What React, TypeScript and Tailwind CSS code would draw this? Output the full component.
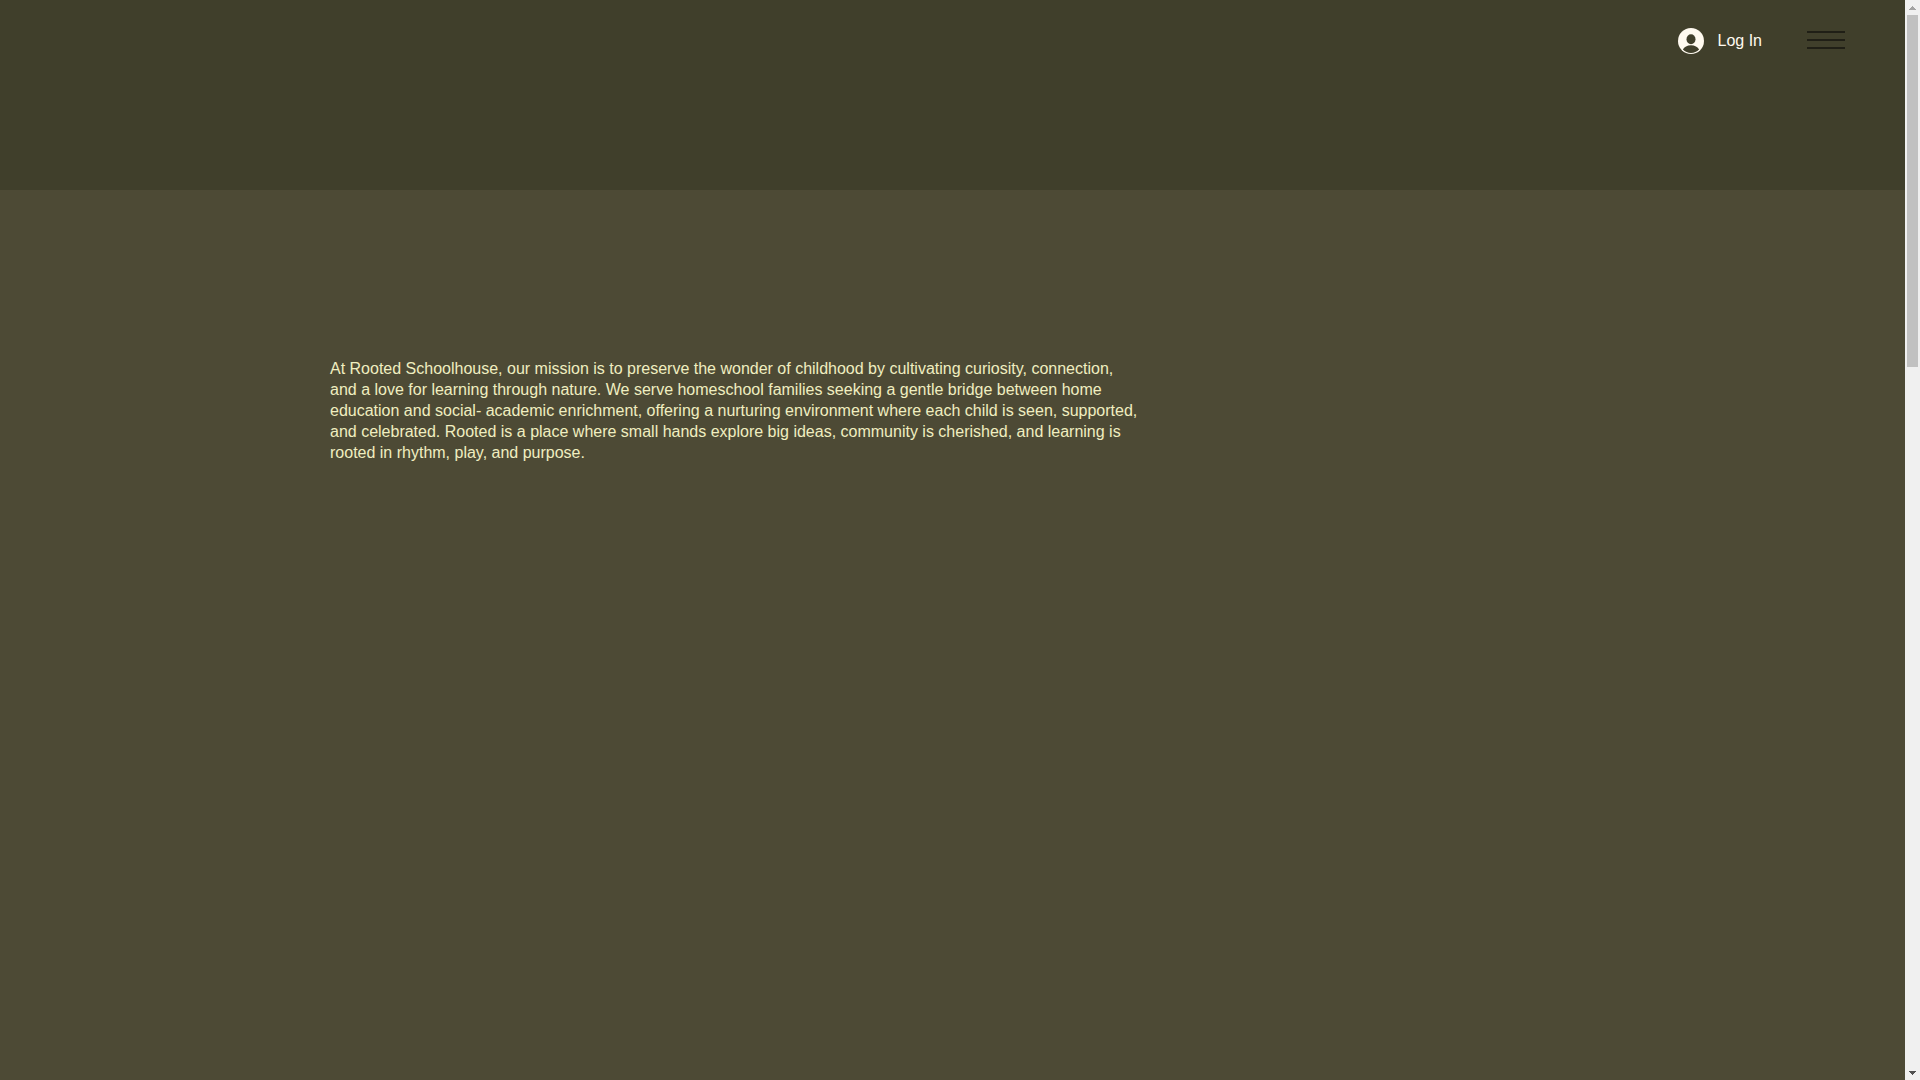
import { useState } from "react";

const mission =
  "At Rooted Schoolhouse, our mission is to preserve the wonder of childhood by cultivating curiosity, connection, and a love for learning through nature. We serve homeschool families seeking a gentle bridge between home education and social- academic enrichment, offering a nurturing environment where each child is seen, supported, and celebrated. Rooted is a place where small hands explore big ideas, community is cherished, and learning is rooted in rhythm, play, and purpose.";

function AvatarIcon() {
  return (
    <svg viewBox="0 0 26 26" className="size-[26px]" aria-hidden="true">
      <circle cx="13" cy="13" r="13" fill="#fffaf0" />
      <ellipse cx="13" cy="11.3" rx="4.5" ry="5" fill="#403f2b" />
      <path
        d="M4.900 21.600C6.200 19 9.200 17.300 13 17.300s6.800 1.700 8.100 4.300C18.900 23.900 16.200 25.100 13 25.100s-5.900-1.200-8.100-3.500Z"
        fill="#403f2b"
      />
    </svg>
  );
}

function Header() {
  const [open, setOpen] = useState(false);

  return (
    <header className="flex h-[190px] items-start justify-end gap-[45px] bg-[#403f2b] pr-[60px]">
      <button type="button" className="mt-7 flex items-center gap-[14px] text-base leading-[26px] text-[#fffaf0]">
        <AvatarIcon />
        Log In
      </button>
      <button
        type="button"
        aria-label="Menu"
        aria-expanded={open}
        onClick={() => setOpen(!open)}
        className="mt-[31px] flex w-[38px] flex-col gap-[6px]"
      >
        <span className="h-[2px] w-full bg-[#201f16]" />
        <span className="h-[2px] w-full bg-[#201f16]" />
        <span className="h-[2px] w-full bg-[#201f16]" />
      </button>
    </header>
  );
}

function Scrollbar() {
  return (
    <div className="flex w-[15px] shrink-0 flex-col items-center bg-[#f0f0f0]" aria-hidden="true">
      <div className="flex h-[15px] w-full items-center justify-center">
        <svg viewBox="0 0 7 4" className="h-1 w-[7px]" shapeRendering="crispEdges">
          <path d="M3 0h1v1h1v1h1v1h1v1H0V3h1V2h1V1h1Z" fill="#a3a3a3" />
        </svg>
      </div>
      <div className="h-[352px] w-[11px] bg-[#c1c1c1]" />
      <div className="mt-auto flex h-[15px] w-full items-center justify-center">
        <svg viewBox="0 0 7 4" className="h-1 w-[7px]" shapeRendering="crispEdges">
          <path d="M0 0h7v1H6v1H5v1H4v1H3V3H2V2H1V1H0Z" fill="#505050" />
        </svg>
      </div>
    </div>
  );
}

export default function App() {
  return (
    <div className="flex min-h-screen bg-[#4d4a35] font-['Liberation_Sans',Arial,sans-serif]">
      <div className="min-w-0 flex-1">
        <Header />
        <main className="px-[330px] pt-[168px]">
          <p className="max-w-[812px] text-base leading-[21px] text-[#f0eec0]">{mission}</p>
        </main>
      </div>
      <Scrollbar />
    </div>
  );
}
